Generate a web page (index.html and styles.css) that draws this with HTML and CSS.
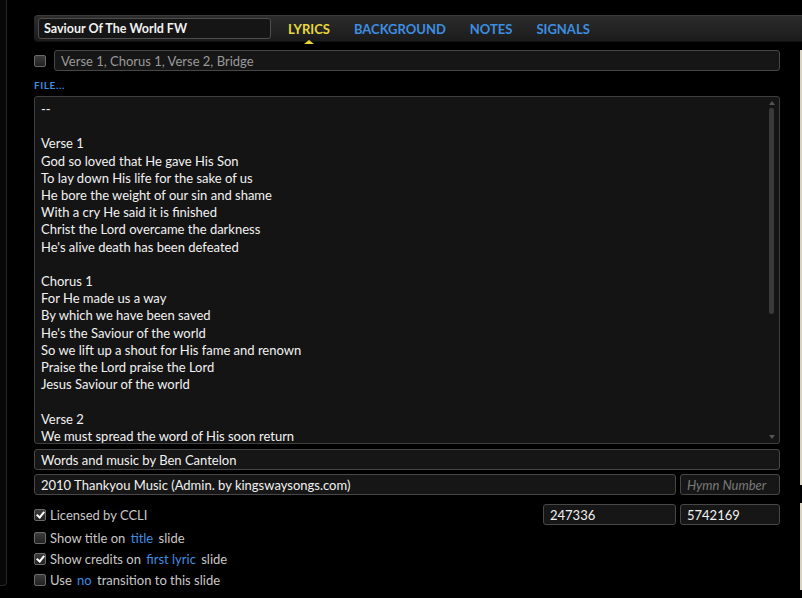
FILE: index.html
```html
<!DOCTYPE html>
<html lang="en">
<head>
  <meta charset="UTF-8" />
  <title>Saviour Of The World FW</title>
  <link rel="stylesheet" href="styles.css">
</head>
<body>
  <div class="side"></div>

  <div class="main">
    <div class="topbar">
      <div class="title-box">Saviour Of The World FW</div>
      <div class="tabs">
        <span class="tab active">LYRICS</span>
        <span class="tab">BACKGROUND</span>
        <span class="tab">NOTES</span>
        <span class="tab">SIGNALS</span>
      </div>
    </div>

    <div class="content-row">
      <div class="form">
        <div class="row">
          <span class="check"></span>
          <div class="field grow placeholder">Verse 1, Chorus 1, Verse 2, Bridge</div>
        </div>

        <div class="file-link">FILE...</div>

        <div class="lyrics">
          <div class="lyrics-text">--

Verse 1
God so loved that He gave His Son
To lay down His life for the sake of us
He bore the weight of our sin and shame
With a cry He said it is finished
Christ the Lord overcame the darkness
He's alive death has been defeated

Chorus 1
For He made us a way
By which we have been saved
He's the Saviour of the world
So we lift up a shout for His fame and renown
Praise the Lord praise the Lord
Jesus Saviour of the world

Verse 2
We must spread the word of His soon return</div>
          <div class="scrollbar">
            <span class="arrow up"></span>
            <span class="thumb"></span>
            <span class="arrow down"></span>
          </div>
        </div>

        <div class="field credits">Words and music by Ben Cantelon</div>

        <div class="row gap4">
          <div class="field grow">2010 Thankyou Music (Admin. by kingswaysongs.com)</div>
          <div class="field small placeholder italic">Hymn Number</div>
        </div>

        <div class="row licence">
          <label class="opt"><span class="check on"></span><span>Licensed by CCLI</span></label>
          <div class="field mid">247336</div>
          <div class="field small">5742169</div>
        </div>

        <div class="options">
          <label class="opt"><span class="check"></span><span>Show title on <a>title</a> slide</span></label>
          <label class="opt"><span class="check on"></span><span>Show credits on <a>first lyric</a> slide</span></label>
          <label class="opt"><span class="check"></span><span>Use <a>no</a> transition to this slide</span></label>
        </div>
      </div>
      <div class="edge">
        <span class="edge-top"></span>
        <span class="edge-bottom"></span>
      </div>
    </div>
  </div>
</body>
</html>
```

FILE: styles.css
```css
html, body {
  margin: 0;
  height: 598px;
  overflow: hidden;
}

body {
  display: flex;
  background: #000;
  color: #f2f2f2;
  font-family: 'Lato', 'Noto Sans', sans-serif;
  font-size: 13px;
}

.side {
  width: 6px;
  height: 585px;
  background: #070707;
  border-right: 1px solid #262626;
  border-bottom: 1px solid #262626;
  border-bottom-right-radius: 4px;
  flex-shrink: 0;
}

.main {
  flex: 1;
  margin-left: 27px;
  padding-top: 15px;
}

.topbar {
  display: flex;
  align-items: center;
  height: 27px;
  padding-left: 4px;
  background: linear-gradient(#2c2c2c, #1b1b1b);
  border-top: 1px solid #3a3a3a;
  border-bottom: 1px solid #111;
  border-radius: 4px 0 0 4px;
  box-sizing: border-box;
}

.title-box {
  width: 233px;
  height: 21px;
  box-sizing: border-box;
  padding: 2px 5px;
  background: #151515;
  border: 1px solid #4e4e4e;
  border-radius: 3px;
  font-weight: bold;
  font-size: 12.5px;
  line-height: 16px;
}

.tabs {
  display: flex;
  gap: 24px;
  margin-left: 17px;
}

.tab {
  position: relative;
  color: #3d8ee0;
  font-size: 13px;
  font-weight: bold;
}

.tab.active {
  color: #e7d83a;
}

.tab.active::after {
  content: "";
  position: absolute;
  left: 50%;
  bottom: -7px;
  margin-left: -5px;
  border: 5px solid transparent;
  border-bottom: 4px solid #e7d83a;
  border-top: 0;
}

.content-row {
  display: flex;
  margin-top: 8px;
}

.form {
  width: 746px;
}

.row {
  display: flex;
  align-items: center;
  gap: 8px;
}

.row.gap4 {
  gap: 4px;
  margin-top: 4px;
}

.field {
  height: 21px;
  box-sizing: border-box;
  padding: 2px 6px;
  background: #161616;
  border: 1px solid #474747;
  border-radius: 3px;
  line-height: 16px;
  white-space: nowrap;
}

.grow {
  flex: 1;
}

.small {
  width: 100px;
}

.mid {
  width: 133px;
}

.placeholder {
  color: #9a9a9a;
}

.italic {
  font-style: italic;
  color: #7a7a7a;
}

.check {
  position: relative;
  display: inline-block;
  width: 10px;
  height: 10px;
  border: 1px solid #6a6a6a;
  border-radius: 2px;
  background: linear-gradient(#3c3c3c, #222);
  flex-shrink: 0;
}

.check.on::after {
  content: "";
  position: absolute;
  left: 3px;
  top: 0;
  width: 3px;
  height: 6px;
  border: solid #fff;
  border-width: 0 2px 2px 0;
  transform: rotate(40deg);
}

.file-link {
  margin-top: 9px;
  color: #3d8ee0;
  font-size: 10px;
  font-weight: bold;
  letter-spacing: 0.6px;
  line-height: 11px;
}

.lyrics {
  display: flex;
  height: 348px;
  margin-top: 5px;
  box-sizing: border-box;
  background: #141414;
  border: 1px solid #3e3e3e;
  border-radius: 3px;
  overflow: hidden;
}

.lyrics-text {
  flex: 1;
  padding: 4px 6px 0;
  white-space: pre;
  line-height: 17.2px;
  overflow: hidden;
}

.scrollbar {
  display: flex;
  flex-direction: column;
  align-items: center;
  width: 9px;
  margin-right: 3px;
  padding: 4px 0;
}

.arrow {
  border: 3px solid transparent;
}

.arrow.up {
  border-bottom: 4px solid #555;
  border-top: 0;
}

.arrow.down {
  border-top: 4px solid #555;
  border-bottom: 0;
  margin-top: auto;
}

.thumb {
  width: 5px;
  height: 206px;
  margin-top: 3px;
  background: #3a3a3a;
  border-radius: 2px;
}

.credits {
  margin-top: 5px;
}

.licence {
  margin-top: 9px;
  gap: 4px;
}

.licence .opt {
  flex: 1;
}

.opt {
  display: flex;
  align-items: center;
  gap: 4px;
  color: #c8c8c8;
  height: 21px;
  white-space: nowrap;
}

.opt a {
  color: #3d8ee0;
  margin: 0 2px;
}

.options {
  margin-top: 2px;
}

.edge {
  display: flex;
  flex-direction: column;
  margin-left: 20px;
  width: 3px;
}

.edge-top {
  height: 435px;
  background: #d9d3c3;
}

.edge-bottom {
  height: 87px;
  margin-top: 18px;
  background: #d9d3c3;
}
```
